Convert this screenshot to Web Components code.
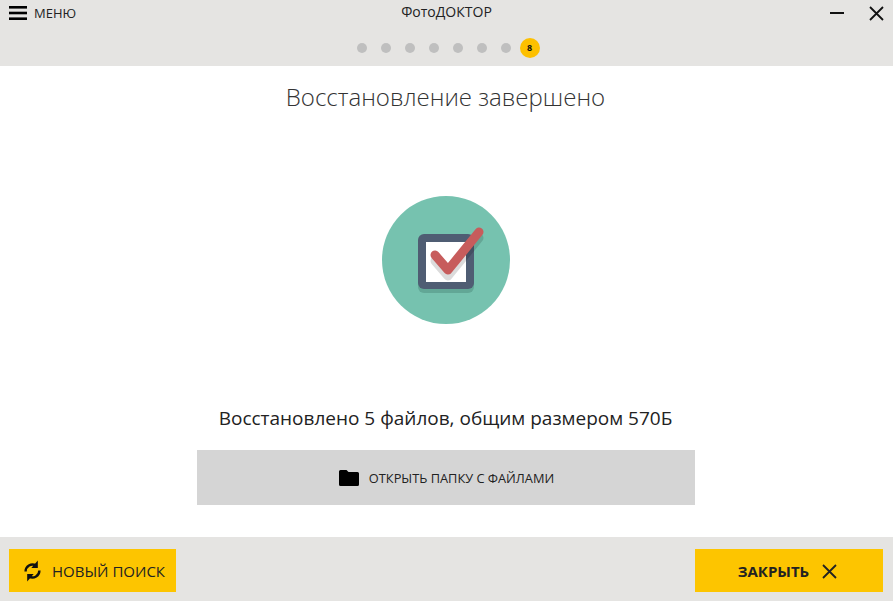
<!DOCTYPE html>
<html lang="ru">
<head>
<meta charset="utf-8">
<title>ФотоДОКТОР</title>
<style>
  html, body { margin: 0; height: 100%; }
  body { font-family: "Open Sans", "Noto Sans", sans-serif; color: #222; background: #fff; }
</style>
</head>
<body>
<app-window>
  <title-bar slot="top" title="ФотоДОКТОР" step="8" steps="8"></title-bar>
  <result-panel heading="Восстановление завершено"
    summary="Восстановлено 5 файлов, общим размером 570Б"
    action="ОТКРЫТЬ ПАПКУ С ФАЙЛАМИ"></result-panel>
  <bottom-bar slot="bottom">
    <action-button icon="refresh">НОВЫЙ ПОИСК</action-button>
    <action-button icon="close" strong>ЗАКРЫТЬ</action-button>
  </bottom-bar>
</app-window>

<script>
const icons = {
  refresh: `<svg width="17" height="22" viewBox="0 0 17 22" fill="none" stroke="#111" stroke-width="2.4">
    <path d="M1.6 11.500A6.900 6.900 0 0 1 11.800 5.400"/>
    <path d="M15.400 10.500A6.900 6.900 0 0 1 5.200 16.600"/>
    <path d="M13.800 0.500v7.500h-6.500z" fill="#111" stroke="none"/>
    <path d="M3.200 21.500v-7.500h6.500z" fill="#111" stroke="none"/>
  </svg>`,
  close: `<svg width="15" height="15" viewBox="0 0 15 15" fill="none" stroke="#222" stroke-width="1.8">
    <path d="M1 1l13 13M14 1L1 14"/>
  </svg>`
};

const windowTpl = document.createElement("template");
windowTpl.innerHTML = `
  <style>
    :host {
      display: flex;
      flex-direction: column;
      width: 893px;
      height: 601px;
      overflow: hidden;
    }
    .content { flex: 1; display: block; min-height: 0; }
  </style>
  <slot name="top"></slot>
  <div class="content"><slot></slot></div>
  <slot name="bottom"></slot>
`;
class AppWindow extends HTMLElement {
  constructor() {
    super();
    this.attachShadow({ mode: "open" }).append(windowTpl.content.cloneNode(true));
  }
}
customElements.define("app-window", AppWindow);

const barTpl = document.createElement("template");
barTpl.innerHTML = `
  <style>
    :host {
      display: block;
      height: 66px;
      background: #e5e4e2;
      font-size: 13px;
      color: #222;
    }
    .row {
      display: grid;
      grid-template-columns: 1fr auto 1fr;
      align-items: center;
      height: 26px;
    }
    .menu {
      display: flex;
      align-items: center;
      gap: 7px;
      padding-left: 9px;
      font-size: 13px;
    }
    .burger { width: 18px; height: 14px; display: block; }
    .name { font-size: 14px; padding-bottom: 4px; }
    .win {
      display: flex;
      justify-content: flex-end;
      align-items: center;
      gap: 25px;
      padding-right: 9px;
    }
    .steps {
      display: flex;
      justify-content: center;
      align-items: center;
      gap: 14px;
      height: 21px;
      margin-top: 11px;
      padding-left: 3px;
    }
    .dot { width: 10px; height: 10px; border-radius: 50%; background: #bfbfbf; }
    .dot.on {
      width: 20px;
      height: 20px;
      margin-left: -5px;
      background: #fdc000;
      color: #111;
      font-size: 9px;
      font-weight: 700;
      display: flex;
      align-items: center;
      justify-content: center;
    }
  </style>
  <div class="row">
    <div class="menu">
      <svg class="burger" viewBox="0 0 18 14" fill="#000">
        <rect y="0" width="18" height="2.600"/>
        <rect y="5.700" width="18" height="2.600"/>
        <rect y="11.400" width="18" height="2.600"/>
      </svg>
      <span>МЕНЮ</span>
    </div>
    <div class="name"></div>
    <div class="win">
      <svg width="14" height="3" viewBox="0 0 14 3"><rect y="0" width="14" height="2" fill="#111"/></svg>
      <svg width="15" height="15" viewBox="0 0 15 15" fill="none" stroke="#111" stroke-width="1.8"><path d="M1 1l13 13M14 1L1 14"/></svg>
    </div>
  </div>
  <div class="steps"></div>
`;
class TitleBar extends HTMLElement {
  constructor() {
    super();
    this.attachShadow({ mode: "open" }).append(barTpl.content.cloneNode(true));
  }
  connectedCallback() {
    this.shadowRoot.querySelector(".name").textContent = this.getAttribute("title");
    const steps = this.shadowRoot.querySelector(".steps");
    const total = Number(this.getAttribute("steps"));
    const current = Number(this.getAttribute("step"));
    for (let i = 1; i <= total; i++) {
      const dot = document.createElement("div");
      dot.className = i === current ? "dot on" : "dot";
      if (i === current) dot.textContent = `${i}`;
      steps.appendChild(dot);
    }
  }
}
customElements.define("title-bar", TitleBar);

const panelTpl = document.createElement("template");
panelTpl.innerHTML = `
  <style>
    :host {
      display: flex;
      flex-direction: column;
      align-items: center;
      height: 100%;
      background: #fff;
    }
    h1 {
      margin: 14px 2px 0 0;
      font-size: 24px;
      line-height: 33px;
      font-weight: 300;
      color: #333;
    }
    .badge { display: block; margin: 83px 1px 0 0; }
    p {
      margin: 80px 2px 0 0;
      font-size: 19px;
      line-height: 28px;
      color: #222;
    }
    button {
      display: flex;
      align-items: center;
      justify-content: center;
      gap: 10px;
      width: 498px;
      height: 55px;
      margin: 18px 1px 0 0;
      border: 0;
      padding: 1px 0 0 1px;
      background: #d5d5d5;
      color: #222;
      font: 12.800px "Open Sans", "Noto Sans", sans-serif;
    }
  </style>
  <h1></h1>
  <svg class="badge" width="128" height="128" viewBox="0 0 128 128">
    <circle cx="64" cy="64" r="64" fill="#76c2af"/>
    <rect x="36" y="42" width="56" height="55" rx="6" fill="#62a796"/>
    <rect x="36" y="38" width="56" height="55" rx="6" fill="#4f5d73"/>
    <rect x="44" y="46" width="40" height="40" fill="#fff"/>
    <path d="M53 62l13 15 31-38" fill="none" stroke="#000" stroke-opacity=".14" stroke-width="9" stroke-linecap="round" stroke-linejoin="round" transform="translate(0 3)"/>
    <path d="M53 59l13 15 31-38" fill="none" stroke="#c75c5c" stroke-width="9" stroke-linecap="round" stroke-linejoin="round"/>
  </svg>
  <p></p>
  <button>
    <svg width="20" height="16" viewBox="0 0 20 16" fill="#000">
      <path d="M1.500 0h6l2 2H18.500A1.500 1.500 0 0 1 20 3.500v11a1.500 1.500 0 0 1-1.500 1.500h-17A1.500 1.500 0 0 1 0 14.500v-13A1.500 1.500 0 0 1 1.500 0z"/>
    </svg>
    <span></span>
  </button>
`;
class ResultPanel extends HTMLElement {
  constructor() {
    super();
    this.attachShadow({ mode: "open" }).append(panelTpl.content.cloneNode(true));
  }
  connectedCallback() {
    const root = this.shadowRoot;
    root.querySelector("h1").textContent = this.getAttribute("heading");
    root.querySelector("p").textContent = this.getAttribute("summary");
    root.querySelector("button span").textContent = this.getAttribute("action");
  }
}
customElements.define("result-panel", ResultPanel);

const bottomTpl = document.createElement("template");
bottomTpl.innerHTML = `
  <style>
    :host {
      display: flex;
      justify-content: space-between;
      height: 64px;
      box-sizing: border-box;
      padding: 12px 10px 9px 9px;
      background: #e5e4e2;
    }
  </style>
  <slot></slot>
`;
class BottomBar extends HTMLElement {
  constructor() {
    super();
    this.attachShadow({ mode: "open" }).append(bottomTpl.content.cloneNode(true));
  }
}
customElements.define("bottom-bar", BottomBar);

const actionTpl = document.createElement("template");
actionTpl.innerHTML = `
  <style>
    :host {
      display: flex;
      align-items: center;
      justify-content: center;
      gap: 11px;
      width: 167px;
      box-sizing: border-box;
      padding: 1px 0 0 4px;
      background: #fdc500;
      color: #222;
      font-size: 15px;
    }
    :host([strong]) {
      width: 188px;
      gap: 13px;
      padding: 1px 3px 0 0;
      font-weight: 700;
    }
    .icon { display: flex; }
  </style>
  <span class="icon"></span>
  <slot></slot>
`;
class ActionButton extends HTMLElement {
  constructor() {
    super();
    this.attachShadow({ mode: "open" }).append(actionTpl.content.cloneNode(true));
  }
  connectedCallback() {
    const icon = this.shadowRoot.querySelector(".icon");
    icon.innerHTML = icons[this.getAttribute("icon")];
    // the close button has its icon after the label
    if (this.hasAttribute("strong")) icon.style.order = 1;
  }
}
customElements.define("action-button", ActionButton);
</script>
</body>
</html>
